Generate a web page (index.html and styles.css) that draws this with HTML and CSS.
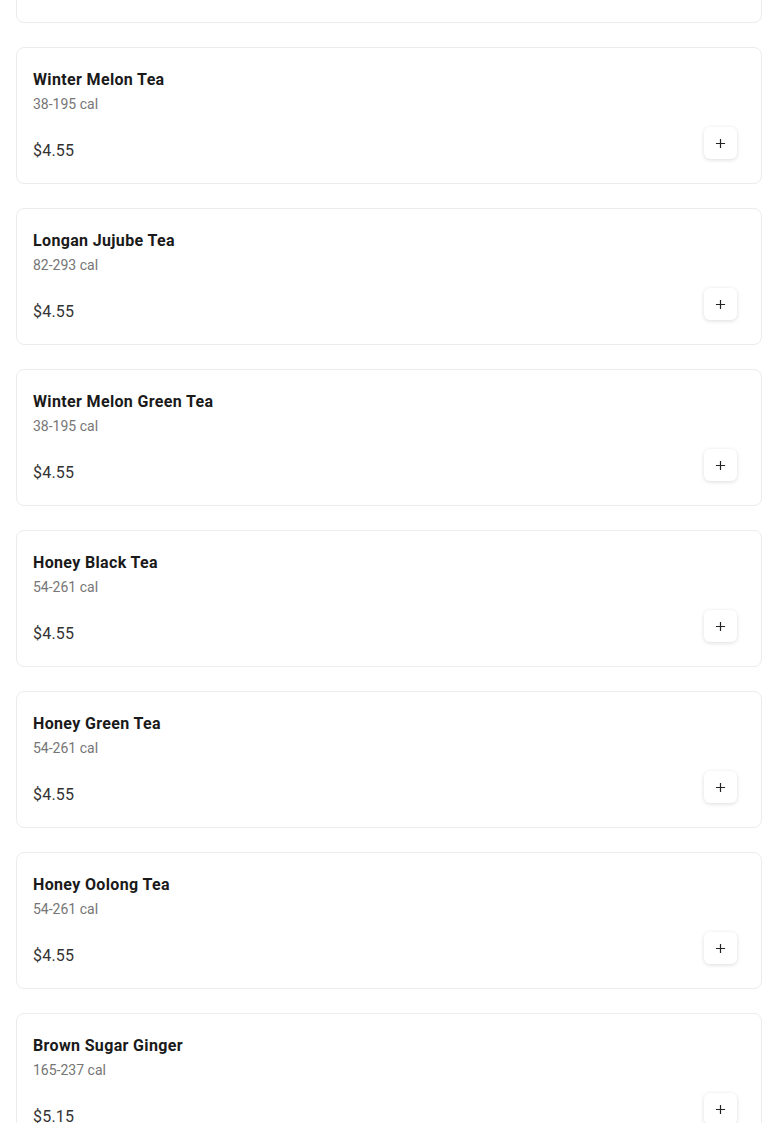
FILE: index.html
```html
<!DOCTYPE html>
<html lang="en">
<head>
  <meta charset="UTF-8" />
  <meta name="viewport" content="width=device-width, initial-scale=1.0">
  <title>Menu</title>
  <link rel="stylesheet" href="styles.css">
</head>
<body>
  <div class="menu-list">
    <div class="item-card item-card-cut">
      <div class="item-footer">
        <span class="item-price">$4.55</span>
      </div>
    </div>

    <div class="item-card">
      <div class="item-name">Winter Melon Tea</div>
      <div class="item-cal">38-195 cal</div>
      <div class="item-footer">
        <span class="item-price">$4.55</span>
        <button class="add-btn"><svg viewBox="0 0 12 12" width="11" height="11"><path d="M6 1v10M1 6h10" stroke="#222" stroke-width="1.3" fill="none"/></svg></button>
      </div>
    </div>

    <div class="item-card">
      <div class="item-name">Longan Jujube Tea</div>
      <div class="item-cal">82-293 cal</div>
      <div class="item-footer">
        <span class="item-price">$4.55</span>
        <button class="add-btn"><svg viewBox="0 0 12 12" width="11" height="11"><path d="M6 1v10M1 6h10" stroke="#222" stroke-width="1.3" fill="none"/></svg></button>
      </div>
    </div>

    <div class="item-card">
      <div class="item-name">Winter Melon Green Tea</div>
      <div class="item-cal">38-195 cal</div>
      <div class="item-footer">
        <span class="item-price">$4.55</span>
        <button class="add-btn"><svg viewBox="0 0 12 12" width="11" height="11"><path d="M6 1v10M1 6h10" stroke="#222" stroke-width="1.3" fill="none"/></svg></button>
      </div>
    </div>

    <div class="item-card">
      <div class="item-name">Honey Black Tea</div>
      <div class="item-cal">54-261 cal</div>
      <div class="item-footer">
        <span class="item-price">$4.55</span>
        <button class="add-btn"><svg viewBox="0 0 12 12" width="11" height="11"><path d="M6 1v10M1 6h10" stroke="#222" stroke-width="1.3" fill="none"/></svg></button>
      </div>
    </div>

    <div class="item-card">
      <div class="item-name">Honey Green Tea</div>
      <div class="item-cal">54-261 cal</div>
      <div class="item-footer">
        <span class="item-price">$4.55</span>
        <button class="add-btn"><svg viewBox="0 0 12 12" width="11" height="11"><path d="M6 1v10M1 6h10" stroke="#222" stroke-width="1.3" fill="none"/></svg></button>
      </div>
    </div>

    <div class="item-card">
      <div class="item-name">Honey Oolong Tea</div>
      <div class="item-cal">54-261 cal</div>
      <div class="item-footer">
        <span class="item-price">$4.55</span>
        <button class="add-btn"><svg viewBox="0 0 12 12" width="11" height="11"><path d="M6 1v10M1 6h10" stroke="#222" stroke-width="1.3" fill="none"/></svg></button>
      </div>
    </div>

    <div class="item-card">
      <div class="item-name">Brown Sugar Ginger</div>
      <div class="item-cal">165-237 cal</div>
      <div class="item-footer">
        <span class="item-price">$5.15</span>
        <button class="add-btn"><svg viewBox="0 0 12 12" width="11" height="11"><path d="M6 1v10M1 6h10" stroke="#222" stroke-width="1.3" fill="none"/></svg></button>
      </div>
    </div>
  </div>
</body>
</html>
```

FILE: styles.css
```css
body {
  font-family: Roboto, "Liberation Sans", Arial, sans-serif;
  background-color: #ffffff;
  color: #1c1c1c;
  margin: 0;
  padding: 0 16px;
  overflow: hidden;
}

.menu-list {
  display: flex;
  flex-direction: column;
  gap: 24px;
  margin-top: -114px;
}

.item-card {
  height: 137px;
  box-sizing: border-box;
  border: 1px solid #ececec;
  border-radius: 8px;
  padding: 21px 24px 0 16px;
  background-color: #fff;
}

.item-name {
  font-size: 16px;
  line-height: 22px;
  font-weight: 700;
  letter-spacing: 0.35px;
  color: #1a1a1a;
}

.item-cal {
  font-size: 14px;
  line-height: 20px;
  margin-top: 3px;
  color: #767676;
}

.item-footer {
  display: flex;
  justify-content: space-between;
  align-items: flex-start;
  margin-top: 26px;
}

.item-card-cut .item-footer {
  margin-top: 71px;
}

.item-price {
  font-size: 16px;
  line-height: 22px;
  letter-spacing: 0.2px;
  color: #333;
}

.add-btn {
  width: 33px;
  height: 32px;
  margin-top: -13px;
  border: none;
  border-radius: 6px;
  background-color: #fff;
  box-shadow: 0 1px 4px rgba(0, 0, 0, 0.14);
  display: flex;
  align-items: center;
  justify-content: center;
  padding: 0;
  cursor: pointer;
}
```
